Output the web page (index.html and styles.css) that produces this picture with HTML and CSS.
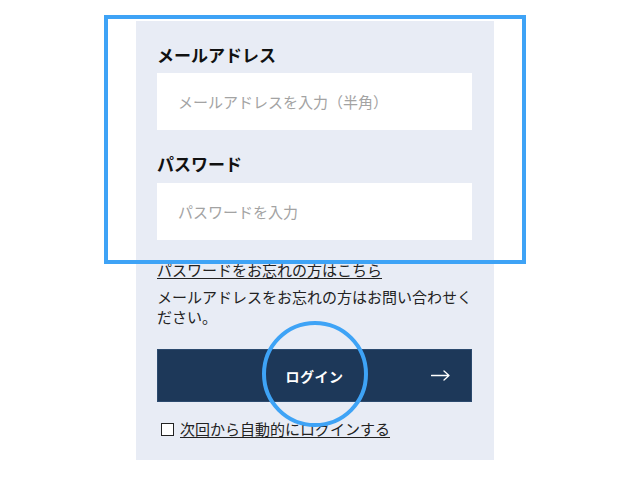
FILE: index.html
```html
<!DOCTYPE html>
<html lang="ja">
<head>
<meta charset="utf-8">
<title>ログイン</title>
<link rel="stylesheet" href="styles.css">
</head>
<body>
<main class="panel">
  <div class="field">
    <label class="label" for="email">メールアドレス</label>
    <input class="input" id="email" type="text" placeholder="メールアドレスを入力（半角）">
  </div>
  <div class="field field-second">
    <label class="label" for="pw">パスワード</label>
    <input class="input" id="pw" type="password" placeholder="パスワードを入力">
  </div>
  <a class="forgot" href="#">パスワードをお忘れの方はこちら</a>
  <p class="note">メールアドレスをお忘れの方はお問い合わせください。</p>
  <button class="login" type="button">
    <span class="login-spacer"></span>
    <span class="login-text">ログイン</span>
    <svg class="login-arrow" width="19" height="11" viewBox="0 0 19 11" aria-hidden="true">
      <path d="M0.5 5.5H18M13 1L18 5.5L13 10" fill="none" stroke="#ffffff" stroke-width="1.3" stroke-linecap="round" stroke-linejoin="round"/>
    </svg>
  </button>
  <label class="remember">
    <span class="checkbox"></span>
    <span class="remember-text">次回から自動的にログインする</span>
  </label>
</main>
<div class="highlight-rect"></div>
<div class="highlight-circle"></div>
</body>
</html>
```

FILE: styles.css
```css
* { box-sizing: border-box; }

html, body {
  margin: 0;
  padding: 0;
  background: #ffffff;
}

body {
  position: relative;
  width: 630px;
  height: 480px;
  font-family: "Noto Sans CJK JP", "Noto Sans", sans-serif;
  color: #222222;
}

.panel {
  width: 358px;
  margin: 21px auto 0;
  padding: 22px 22px 21px 21px;
  background: #e8ecf5;
  display: flex;
  flex-direction: column;
}

.field {
  display: flex;
  flex-direction: column;
  gap: 6px;
}

.field-second {
  margin-top: 22px;
  gap: 7px;
}

.label {
  font-size: 17px;
  line-height: 24px;
  font-weight: 700;
  color: #111111;
}

.input {
  height: 57px;
  width: 100%;
  border: none;
  outline: none;
  background: #ffffff;
  padding: 0 21px;
  font-family: inherit;
  font-size: 15px;
  color: #222222;
}

.input::placeholder {
  color: #a3a3a3;
}

.forgot {
  margin-top: 20px;
  align-self: flex-start;
  font-size: 15px;
  line-height: 20px;
  color: #222222;
  text-decoration: underline;
  text-underline-offset: 2px;
}

.note {
  margin: 7px 0 0;
  font-size: 15px;
  line-height: 20px;
}

.login {
  margin-top: 22px;
  height: 53px;
  width: 100%;
  border: 1px solid #2c4a6e;
  background: #1d3859;
  color: #ffffff;
  display: grid;
  grid-template-columns: 1fr auto 1fr;
  align-items: center;
  padding: 0 21px;
  font-family: inherit;
  cursor: pointer;
}

.login-text {
  font-size: 14px;
  font-weight: 700;
  letter-spacing: 0.5px;
}

.login-arrow {
  justify-self: end;
}

.remember {
  margin-top: 17px;
  display: flex;
  align-items: center;
  gap: 6px;
  padding-left: 4px;
  font-size: 15px;
  line-height: 20px;
}

.checkbox {
  width: 13px;
  height: 13px;
  border: 1.5px solid #222222;
  background: #ffffff;
  flex: none;
}

.remember-text {
  text-decoration: underline;
  text-underline-offset: 2px;
}

.highlight-rect {
  position: absolute;
  left: 104px;
  top: 15px;
  width: 422px;
  height: 249px;
  border: 4px solid #3ea3f6;
  pointer-events: none;
}

.highlight-circle {
  position: absolute;
  left: 262px;
  top: 321px;
  width: 106px;
  height: 106px;
  border: 4px solid #3ea3f6;
  border-radius: 50%;
  pointer-events: none;
}
```
